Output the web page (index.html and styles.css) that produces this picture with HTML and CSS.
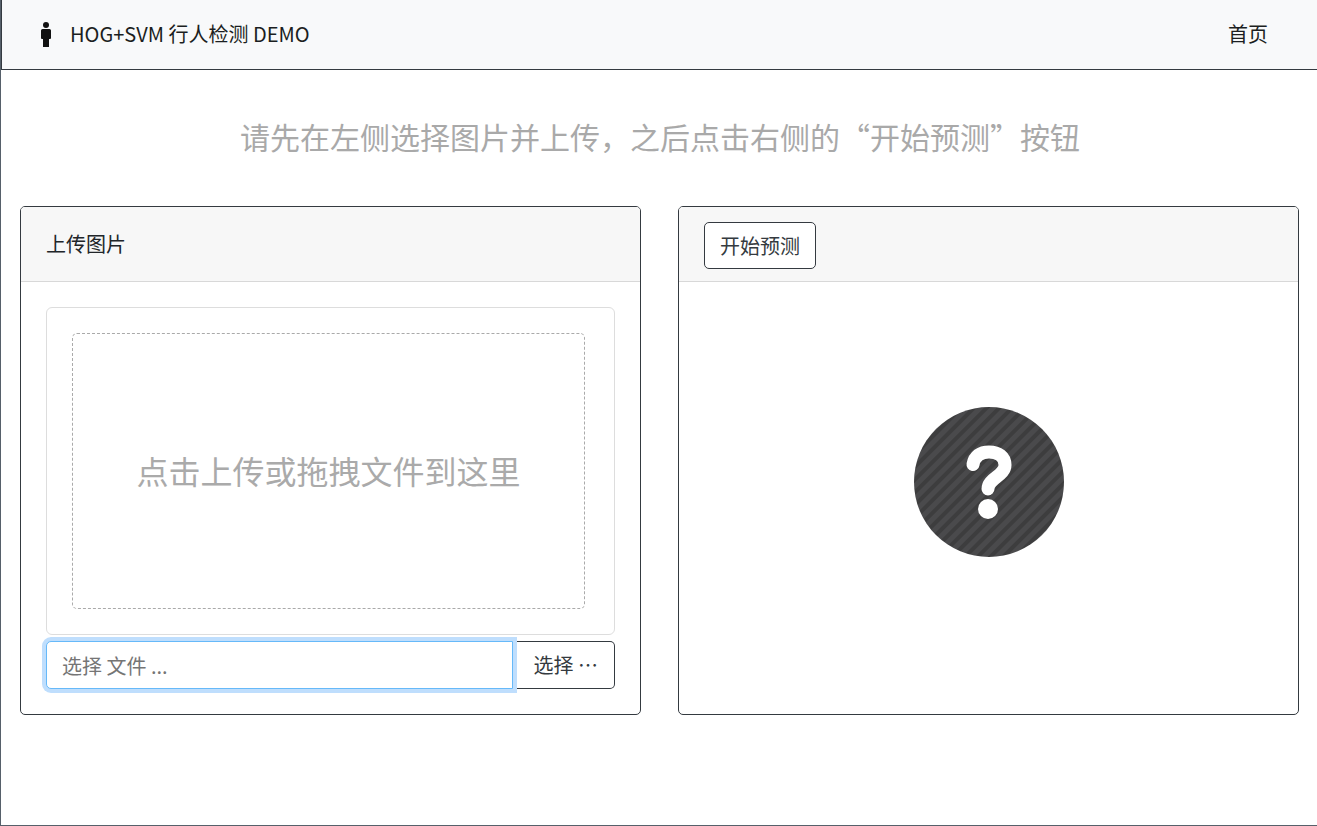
FILE: index.html
```html
<!DOCTYPE html>
<html lang="zh-CN">
<head>
<meta charset="utf-8">
<meta name="viewport" content="width=device-width, initial-scale=1">
<title>HOG+SVM 行人检测 DEMO</title>
<link rel="stylesheet" href="styles.css">
</head>
<body>
<div class="page">
  <header class="navbar">
    <a class="brand" href="#">
      <svg class="brand-icon" viewBox="0 0 12 26" aria-hidden="true">
        <circle cx="6" cy="4" r="3"/>
        <path d="M2.500 8h7Q11 8 11 9.500V17Q11 18 10 18H9v8H3V18H2Q1 18 1 17V9.500Q1 8 2.500 8z"/>
      </svg>
      <span>HOG+SVM 行人检测 DEMO</span>
    </a>
    <nav><a class="nav-link" href="#">首页</a></nav>
  </header>
  <main>
    <h1 class="hint">请先在左侧选择图片并上传，之后点击右侧的“开始预测”按钮</h1>
    <div class="cards">
      <section class="card">
        <div class="card-header"><h2 class="card-title">上传图片</h2></div>
        <div class="card-body">
          <div class="preview">
            <div class="drop-zone">点击上传或拖拽文件到这里</div>
          </div>
          <div class="input-group">
            <input class="file-caption" type="text" placeholder="选择 文件 ..." aria-label="选择 文件">
            <button class="btn btn-browse" type="button">选择 ⋯</button>
          </div>
        </div>
      </section>
      <section class="card">
        <div class="card-header"><button class="btn" type="button">开始预测</button></div>
        <div class="card-body result">
          <svg class="unknown" viewBox="0 0 150 150" role="img" aria-label="?">
            <defs>
              <pattern id="stripes" width="9" height="9" patternUnits="userSpaceOnUse" patternTransform="rotate(45)">
                <rect width="9" height="9" fill="#3d3d3e"/>
                <rect width="5" height="9" fill="#4a4a4c"/>
              </pattern>
            </defs>
            <circle cx="75" cy="75" r="75" fill="url(#stripes)"/>
            <path d="M59 57.500C60.500 49 66.500 45 75 45C84.500 45 91 49.500 91 58C91 69 74 71 74 82" fill="none" stroke="#fff" stroke-width="13" stroke-linecap="round"/>
            <circle cx="74" cy="102" r="10" fill="#fff"/>
          </svg>
        </div>
      </section>
    </div>
  </main>
</div>
</body>
</html>
```
FILE: styles.css
```css
* {
  box-sizing: border-box;
}

body {
  margin: 0;
  color: #212529;
  background: #fff;
  font: 20px/30px "Noto Sans CJK SC", "Noto Sans", sans-serif;
}

.page {
  min-height: 100vh;
  border: solid #56606a;
  border-width: 0 0 1px 1px;
}

.navbar {
  display: flex;
  align-items: center;
  justify-content: space-between;
  padding: 14px 49px 15px 38px;
  border: solid #343a40;
  border-width: 0 0 1px 1px;
  background: #f8f9fa;
  line-height: 40px;
}

.brand,
.nav-link {
  color: #1b1e21;
  text-decoration: none;
}

.brand {
  display: flex;
  align-items: center;
  gap: 18px;
}

.brand-icon {
  width: 12px;
  height: 26px;
  fill: #111;
}

.hint {
  margin: 0;
  padding: 44px 18px 48px 20px;
  color: #a9a9a9;
  font-size: 30px;
  font-weight: 400;
  line-height: 44px;
  text-align: center;
}

.cards {
  display: grid;
  grid-template-columns: 1fr 1fr;
  gap: 37px;
  padding: 0 18px 24px 19px;
}

.card {
  display: flex;
  flex-direction: column;
  border: 1px solid #343a40;
  border-radius: 5px;
  overflow: hidden;
}

.card-header {
  padding: 15px 26px 12px 25px;
  border-bottom: 1px solid #d8d8d8;
  background: #f7f7f7;
}

.card-title {
  margin: 0;
  font-size: 20px;
  font-weight: 400;
  line-height: 43px;
  padding-bottom: 4px;
}

.card-body {
  flex: 1;
  padding: 25px;
}

.btn {
  height: 47px;
  padding: 0 15px;
  border: 1px solid #343a40;
  border-radius: 5px;
  background: #fff;
  color: #343a40;
  font: inherit;
}

.preview {
  margin-bottom: 6px;
  padding: 25px 29px 25px 25px;
  border: 1px solid #ddd;
  border-radius: 6px;
}

.drop-zone {
  display: grid;
  place-items: center;
  min-height: 276px;
  padding-bottom: 3px;
  border: 1px dashed #aaa;
  border-radius: 5px;
  color: #aaa;
  font-size: 32px;
  line-height: 48px;
}

.input-group {
  display: flex;
}

.file-caption {
  flex: 1;
  z-index: 1;
  position: relative;
  min-width: 0;
  height: 48px;
  padding: 0 15px;
  border: 1px solid #66b9f9;
  border-radius: 5px 0 0 5px;
  outline: 0;
  box-shadow: 0 0 0 4px #bfdefd;
  color: #495057;
  font: inherit;
}

.file-caption::placeholder {
  color: #757575;
  opacity: 1;
}

.btn-browse {
  height: 48px;
  padding: 0 16px 0 21px;
  border-left: 0;
  border-radius: 0 5px 5px 0;
}

.result {
  display: grid;
  place-items: center;
  padding-bottom: 57px;
}

.unknown {
  width: 150px;
  height: 150px;
}
```
